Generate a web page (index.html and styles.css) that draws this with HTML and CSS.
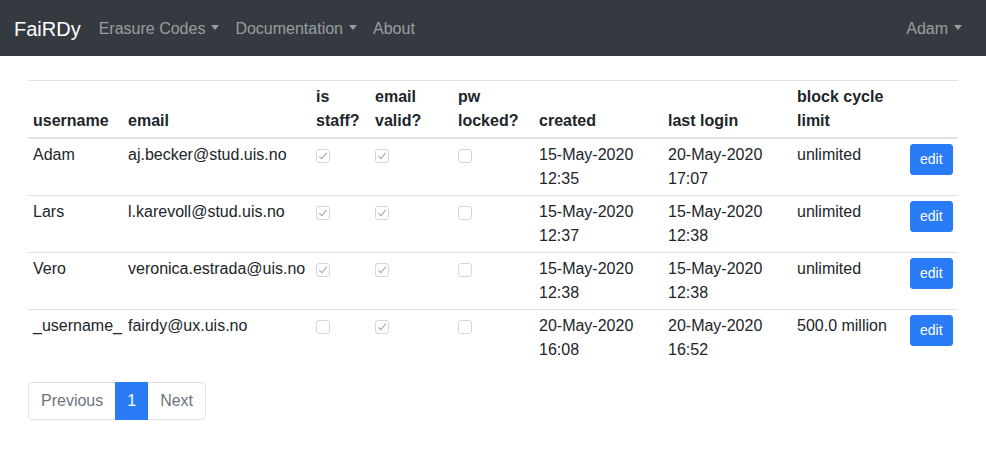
FILE: index.html
```html
<!DOCTYPE html>
<html lang="en">
<head>
<meta charset="utf-8">
<title>FaiRDy - Users</title>
<link rel="stylesheet" href="styles.css">
</head>
<body>
<nav class="navbar">
  <a class="brand" href="#">FaiRDy</a>
  <ul class="nav">
    <li><a class="nav-link dropdown" href="#">Erasure Codes</a></li>
    <li><a class="nav-link dropdown" href="#">Documentation</a></li>
    <li><a class="nav-link" href="#">About</a></li>
  </ul>
  <ul class="nav nav-right">
    <li><a class="nav-link dropdown" href="#">Adam</a></li>
  </ul>
</nav>
<main class="content">
  <table class="table">
    <colgroup>
      <col class="c-user"><col class="c-email"><col class="c-staff"><col class="c-valid"><col class="c-locked"><col class="c-date"><col class="c-date"><col class="c-limit"><col class="c-edit">
    </colgroup>
    <thead>
      <tr>
        <th>username</th><th>email</th><th>is staff?</th><th>email valid?</th><th>pw locked?</th><th>created</th><th>last login</th><th>block cycle limit</th><th></th>
      </tr>
    </thead>
    <tbody>
      <tr>
        <td>Adam</td><td class="nowrap">aj.becker@stud.uis.no</td>
        <td><span class="cb checked"></span></td><td><span class="cb checked"></span></td><td><span class="cb"></span></td>
        <td>15-May-2020 12:35</td><td>20-May-2020 17:07</td><td>unlimited</td><td><a class="btn" href="#">edit</a></td>
      </tr>
      <tr>
        <td>Lars</td><td class="nowrap">l.karevoll@stud.uis.no</td>
        <td><span class="cb checked"></span></td><td><span class="cb checked"></span></td><td><span class="cb"></span></td>
        <td>15-May-2020 12:37</td><td>15-May-2020 12:38</td><td>unlimited</td><td><a class="btn" href="#">edit</a></td>
      </tr>
      <tr>
        <td>Vero</td><td class="nowrap">veronica.estrada@uis.no</td>
        <td><span class="cb checked"></span></td><td><span class="cb checked"></span></td><td><span class="cb"></span></td>
        <td>15-May-2020 12:38</td><td>15-May-2020 12:38</td><td>unlimited</td><td><a class="btn" href="#">edit</a></td>
      </tr>
      <tr>
        <td>_username_</td><td class="nowrap">fairdy@ux.uis.no</td>
        <td><span class="cb"></span></td><td><span class="cb checked"></span></td><td><span class="cb"></span></td>
        <td>20-May-2020 16:08</td><td>20-May-2020 16:52</td><td>500.0 million</td><td><a class="btn" href="#">edit</a></td>
      </tr>
    </tbody>
  </table>
  <ul class="pagination">
    <li><a class="page-link" href="#">Previous</a></li>
    <li><a class="page-link active" href="#">1</a></li>
    <li><a class="page-link" href="#">Next</a></li>
  </ul>
</main>
</body>
</html>
```

FILE: styles.css
```css
* { box-sizing: border-box; }
body {
  margin: 0;
  font-family: "Liberation Sans", Arial, sans-serif;
  font-size: 16px;
  line-height: 1.5;
  color: #212529;
  background: #fff;
}
a { text-decoration: none; }
ul { list-style: none; margin: 0; padding: 0; }

.navbar {
  display: flex;
  align-items: center;
  height: 56px;
  padding: 2px 16px 0 14px;
  background: #343a40;
}
.brand {
  color: #fff;
  font-size: 20px;
  line-height: 30px;
  margin-right: 10px;
}
.nav { display: flex; }
.nav-right { margin-left: auto; }
.nav-link {
  display: block;
  padding: 8px 8px;
  color: rgba(255, 255, 255, 0.5);
  line-height: 24px;
}
.dropdown::after {
  content: "";
  display: inline-block;
  margin-left: 6px;
  vertical-align: 4px;
  border-top: 5px solid;
  border-left: 4.5px solid transparent;
  border-right: 4.5px solid transparent;
}

.content { padding: 24px 28px 0; }

.table {
  width: 100%;
  table-layout: fixed;
  border-collapse: collapse;
  margin-bottom: 16px;
}
.c-user { width: 95px; }
.c-email { width: 188px; }
.c-staff { width: 59px; }
.c-valid { width: 83px; }
.c-locked { width: 81px; }
.c-date { width: 129px; }
.c-limit { width: 113px; }
.c-edit { width: 53px; }

.table th, .table td {
  padding: 4px 5px;
  text-align: left;
  vertical-align: top;
  border-top: 1px solid #dee2e6;
}
.table th {
  font-weight: bold;
  vertical-align: bottom;
  border-bottom: 2px solid #dee2e6;
}
.nowrap { white-space: nowrap; }

.cb {
  display: inline-block;
  width: 14px;
  height: 14px;
  margin-top: 6px;
  border: 1px solid #d6d6d6;
  border-radius: 3px;
  background: #fff;
  vertical-align: top;
  position: relative;
}
.cb.checked::after {
  content: "";
  position: absolute;
  left: 4px;
  top: 1px;
  width: 3px;
  height: 7px;
  border-right: 1.3px solid #a0a0a0;
  border-bottom: 1.3px solid #a0a0a0;
  transform: rotate(40deg);
}

.btn {
  display: inline-block;
  margin-top: 1px;
  padding: 4px 9px;
  font-size: 14px;
  line-height: 21px;
  color: #fff;
  background: #2a7cf6;
  border: 1px solid #2a7cf6;
  border-radius: 3px;
}

.pagination { display: flex; }
.page-link {
  display: block;
  padding: 8px 12px;
  line-height: 20px;
  color: #6c757d;
  border: 1px solid #dee2e6;
  margin-left: -1px;
  background: #fff;
}
.pagination li:first-child .page-link {
  margin-left: 0;
  border-radius: 4px 0 0 4px;
}
.pagination li:last-child .page-link { border-radius: 0 4px 4px 0; }
.page-link.active {
  padding: 8px 11px;
  color: #fff;
  background: #2a7cf6;
  border-color: #2a7cf6;
  position: relative;
}
```
